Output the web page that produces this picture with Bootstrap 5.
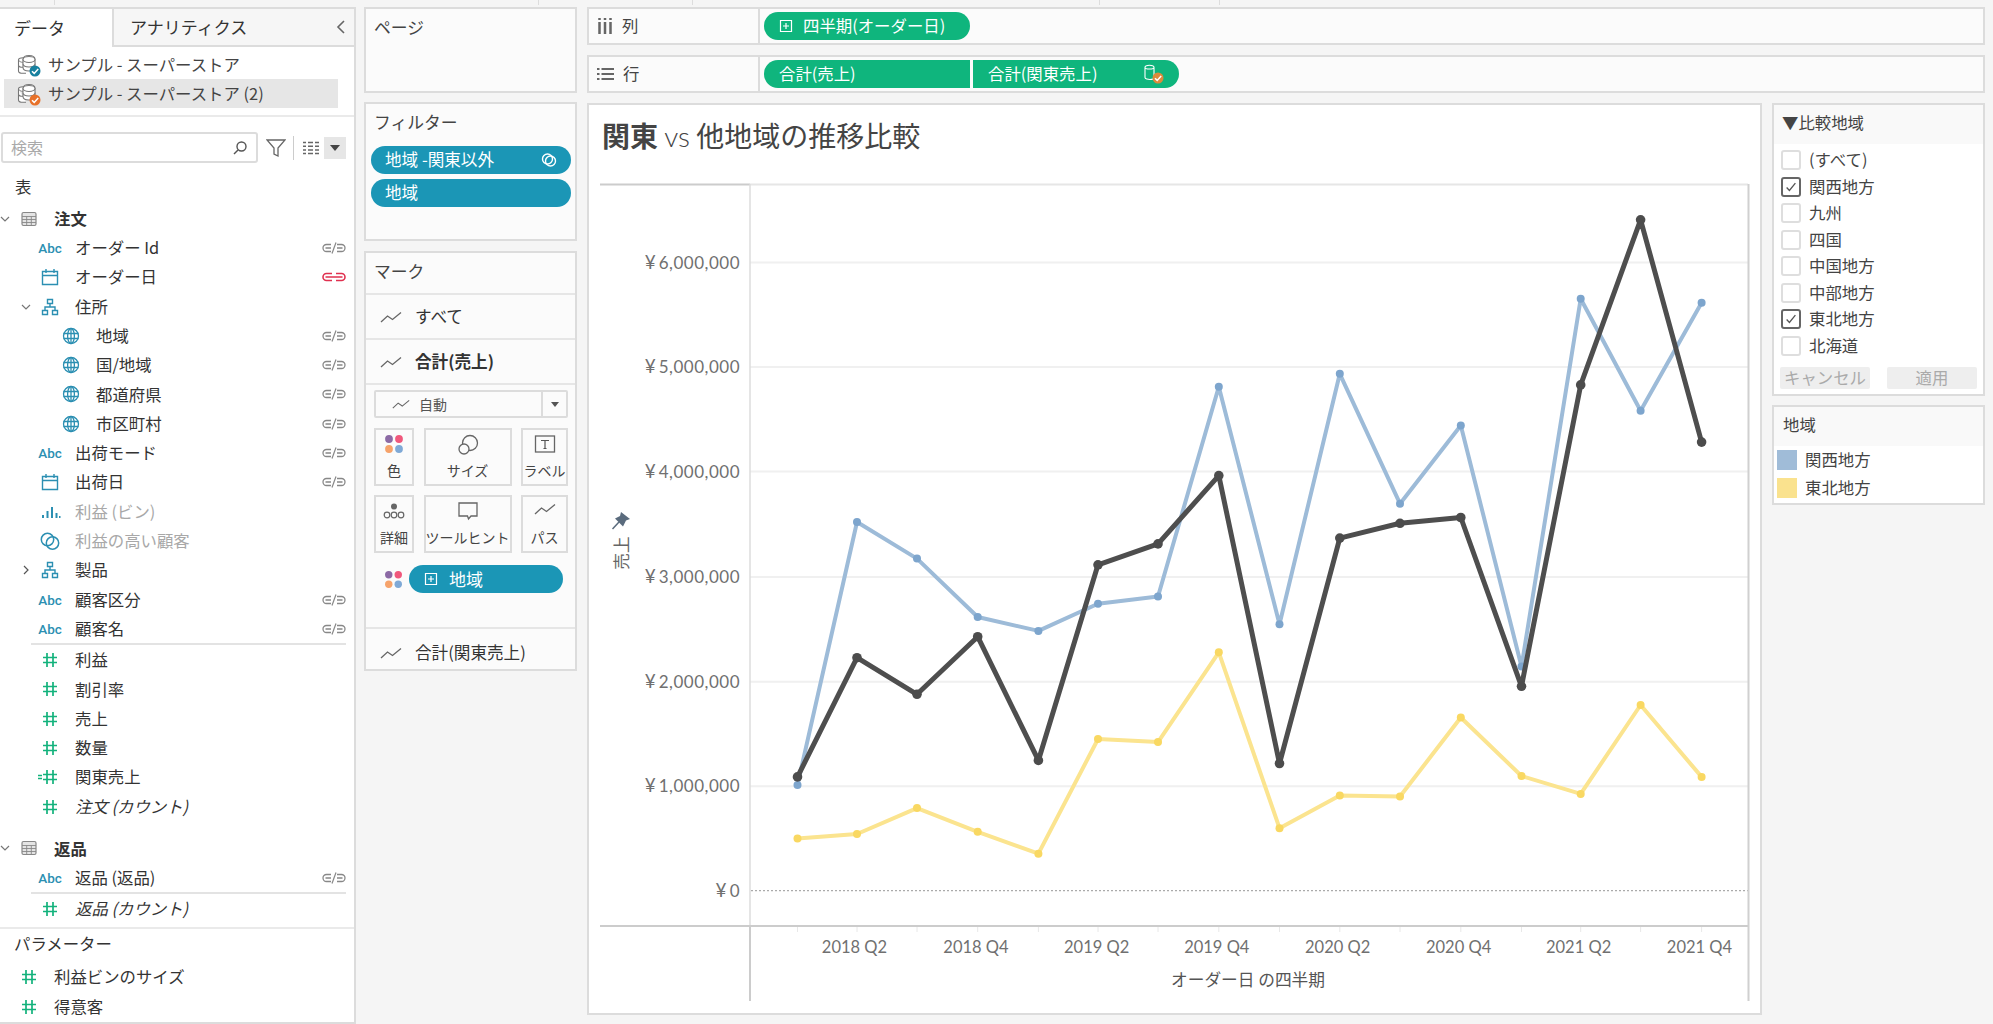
<!DOCTYPE html>
<html lang="ja">
<head>
<meta charset="utf-8">
<title>関東 vs 他地域の推移比較</title>
<link href="https://cdn.jsdelivr.net/npm/bootstrap@5.3.0/dist/css/bootstrap.min.css" rel="stylesheet">
<style>
html,body{height:1024px;overflow:hidden}
body{background:#f5f5f5;color:#333;font-family:"Noto Sans CJK JP","Noto Sans",sans-serif;font-size:16.4px;line-height:1.2}
svg{display:block;flex:none}
.t-strip{height:7px}
.t-strip span{height:5px;border-right:1px solid #ddd}
.t-root{height:1017px}
.t-box{border:2px solid #dcdcdc;background:#fbfbfb}
.t-left{width:356px;height:1017px;background:#fff;border-top:2px solid #dcdcdc;border-right:2px solid #dcdcdc;border-bottom:2px solid #dcdcdc;overflow:hidden}
.t-tabs{height:38px;font-size:17px}
.t-tab1{width:112px;padding-left:14px}
.t-tab2{padding-left:16px;padding-right:8px;background:#f6f6f6;border-left:2px solid #dcdcdc;border-bottom:2px solid #dcdcdc}
.t-src{height:29px;padding-left:16px;margin:0 16px 0 4px;gap:7px;color:#444}
.t-src.t-sel{background:#e6e6e6}
.t-src svg{margin-left:-3px}
.t-hr{height:2px;background:#eaeaea}
.t-sep{height:2px;background:#e3e3e3;margin:0 8px 0 31px}
.t-srch{width:257px;height:31px;margin-left:1px;border:2px solid #dcdcdc;border-radius:3px;padding:0 8px;color:#aaa;font-size:16px}
.t-tool{height:31px;margin-top:15px}
.t-ddbtn{width:22px;height:22px;background:#e6e6e6}
.t-ddbtn i{border-left:5px solid transparent;border-right:5px solid transparent;border-top:6px solid #444}
.t-row{height:29.3px;padding-right:8px}
.t-row-1{padding-left:38px}
.t-row-2{padding-left:59px}
.t-row-g{padding-left:0}
.t-row-c{padding-left:20px}
.t-row-p{padding-left:17px}
.t-slot{width:24px;height:24px;margin-right:13px;flex:none}
.t-abc{color:#2b8fb2;font:500 13.5px Roboto,sans-serif}
.t-gray{color:#a8a8a8}
.t-chv{width:12px;margin-right:6px;flex:none}
.t-chv0{width:10px;margin-right:7px;flex:none}
.t-col2{width:213px;margin-left:8px}
.t-head{padding:8px 8px 0 8px;color:#444;font-size:16.8px}
.t-pill{height:28px;border-radius:14px;background:#1b96b6;color:#fff;padding:0 14px;font-size:16.6px}
.t-pillg{height:28px;background:#0fb57d;color:#fff;padding:0 15px}
.t-mrow{height:45px;padding-left:14px;gap:13px;border-top:2px solid #e6e6e6;font-size:16.6px}
.t-dd{height:28px;margin:7px 7px 0 8px;border:2px solid #dcdcdc;border-radius:2px;padding-left:16px;gap:9px;color:#555;font-size:14px}
.t-ddarrow{width:25px;height:100%;border-left:2px solid #dcdcdc;margin-left:auto}
.t-ddarrow i{border-left:4px solid transparent;border-right:4px solid transparent;border-top:5px solid #555}
.t-mgrid{display:grid;grid-template-columns:40px 88px 47px;column-gap:9.5px;row-gap:9px;margin:10px 7px 0 8px}
.t-mbtn{height:58px;border:2px solid #dcdcdc;font-size:14px;color:#444;padding-top:4px;white-space:nowrap;justify-content:space-between;padding-bottom:5px}
.t-main{margin-left:10px;width:1398px}
.t-shelf{height:38px;background:#fbfbfb;border:2px solid #dcdcdc;width:1398px;margin-bottom:10px}
.t-shelflab{width:171px;height:100%;border-right:2px solid #dcdcdc;padding-left:8px;gap:9px;color:#444;flex:none}
.t-chart{width:1175px;height:912px;background:#fff;border:2px solid #dcdcdc;overflow:hidden}
.t-title{height:66px;padding:12px 0 0 13px;font-size:28px;color:#444;line-height:36px}
.t-title b{font-weight:700}
.t-title span{font-family:Lato,"Noto Sans CJK JP",sans-serif;font-weight:300}
.t-side{width:213px;margin-left:10px}
.t-shead{height:39px;background:#f9f9f9;padding-left:8px;padding-bottom:3px;color:#444}
.t-card{background:#fff;border:2px solid #dcdcdc}
.t-chk{height:26.5px;padding-left:7px;gap:8px;color:#444}
.t-box20{width:20px;height:20px;border:2px solid #dedede;border-radius:3px;flex:none}
.t-box20.t-on{border-color:#666}
.t-btns{gap:17px;padding:8px 6px 0 6px;height:41px}
.t-gbtn{width:90px;height:22px;background:#eee;color:#aaa;border-radius:2px}
.t-leg{height:28px;padding-left:3px;gap:8px;color:#444}
.t-sw{width:20px;height:20px;flex:none}
.ax{font-family:Lato,"Noto Sans CJK JP",sans-serif;font-size:17px;fill:#707070;letter-spacing:.5px}
.ax tspan{font-size:19px;letter-spacing:3px}
.axx{font-family:Lato,"Noto Sans CJK JP",sans-serif;font-size:16.5px;fill:#707070}
.ax2{font-family:"Noto Sans CJK JP",sans-serif;font-size:16.7px;fill:#555}
</style>
</head>
<body>
<svg width="0" height="0" class="position-absolute">
<defs>
<symbol id="i-hash" viewBox="0 0 24 24"><path d="M9 5v14M15 5v14M5 9.500h14M5 14.500h14" stroke="#13b27c" stroke-width="1.700" fill="none"/></symbol>
<symbol id="i-cal" viewBox="0 0 24 24"><path d="M4.500 6.500h15v13h-15zM4.500 10.500h15M8 4v4M16 4v4" stroke="#2b8fb2" stroke-width="1.400" fill="none"/></symbol>
<symbol id="i-tree" viewBox="0 0 24 24"><path d="M9.500 4.500h5v4h-5zM4.500 15.500h5v4h-5zM14.500 15.500h5v4h-5zM12 8.500v3.500M7 15.500V12h10v3.500" stroke="#2b8fb2" stroke-width="1.400" fill="none"/></symbol>
<symbol id="i-globe" viewBox="0 0 24 24"><g stroke="#2b8fb2" stroke-width="1.300" fill="none"><circle cx="12" cy="12" r="7.500"/><ellipse cx="12" cy="12" rx="3.400" ry="7.500"/><path d="M4.500 9.500h15M4.500 14.500h15M12 4.500v15"/></g></symbol>
<symbol id="i-bins" viewBox="0 0 24 24"><path d="M4 18h2v-3H4zM8.500 18h2v-7h-2zM13 18h2V7h-2zM17.500 18h2v-5h-2z" fill="#2b8fb2"/><path d="M21 18h1.500v-2H21z" fill="#2b8fb2"/></symbol>
<symbol id="i-set" viewBox="0 0 24 24"><g stroke="#2b8fb2" stroke-width="1.500" fill="none"><circle cx="9.500" cy="10.500" r="6.200"/><circle cx="14.500" cy="14" r="6.200"/></g></symbol>
<symbol id="i-table" viewBox="0 0 24 24"><rect x="5" y="5.500" width="14" height="13" rx="1.500" fill="#e4e4e4" stroke="#888" stroke-width="1.200"/><path d="M5 9.500h14M5 12.500h14M5 15.500h14M9.700 9.500v9M14.300 9.500v9" stroke="#888" stroke-width=".9"/></symbol>
<symbol id="i-link" viewBox="0 0 24 12"><path d="M9 2.500H4.500a3.500 3.500 0 0 0 0 7H9M3.500 6H9M15 2.500h4.500a3.500 3.500 0 0 1 0 7H15M15 6h5.500" stroke="#888" stroke-width="1.300" fill="none"/><path d="M10 11.500 14 .5" stroke="#888" stroke-width="1.200"/></symbol>
<symbol id="i-linkr" viewBox="0 0 24 12"><path d="M10 2.500H4.500a3.500 3.500 0 0 0 0 7H10M14 2.500h5.500a3.500 3.500 0 0 1 0 7H14M3.500 6h17" stroke="#e0304f" stroke-width="1.600" fill="none"/></symbol>
<symbol id="i-line" viewBox="0 0 22 14"><path d="M1 12l6.500-6 5 3.500L21 2.500" stroke="#666" stroke-width="1.300" fill="none"/></symbol>
<symbol id="i-down" viewBox="0 0 10 10"><path d="M1 3l4 4 4-4" stroke="#777" stroke-width="1.200" fill="none"/></symbol>
<symbol id="i-right" viewBox="0 0 10 10"><path d="M3 1l4 4-4 4" stroke="#555" stroke-width="1.200" fill="none"/></symbol>
<symbol id="i-db" viewBox="0 0 24 24"><g stroke="#777" stroke-width="1.100" fill="#fff"><ellipse cx="6" cy="7" rx="4.500" ry="2.300"/><path d="M1.500 7v11c0 1.500 2 2.300 4.500 2.300h3M1.500 12c0 1.500 2 2.300 4.500 2.300"/><path d="M6 6.500c0-2.500 2.500-4 6-4s6 1.500 6 4v8c0 2-2.500 3.500-6 3.500s-6-1.500-6-3.500z"/><ellipse cx="12" cy="6.500" rx="6" ry="3"/><path d="M6 10.500c0 2 2.500 3.500 6 3.500s6-1.500 6-3.500"/></g></symbol>
<symbol id="i-ok" viewBox="0 0 12 12"><path d="M3 6.200l2.200 2.200L9.200 4" stroke="#fff" stroke-width="1.500" fill="none"/></symbol>
<symbol id="i-plus" viewBox="0 0 14 14"><path d="M1.500 1.500h11v11h-11zM7 4v6M4 7h6" stroke="#fff" stroke-width="1.200" fill="none"/></symbol>
<symbol id="i-dots" viewBox="0 0 20 20"><circle cx="5" cy="5" r="3.900" fill="#8c6aa5"/><circle cx="15" cy="5" r="3.900" fill="#f0587c"/><circle cx="5" cy="15" r="3.900" fill="#f6a36b"/><circle cx="15" cy="15" r="3.900" fill="#7fa9d6"/></symbol>
<symbol id="i-tick" viewBox="0 0 16 16"><path d="M3 8.500l3.200 3.500L13 3.500" stroke="#555" stroke-width="1.500" fill="none"/></symbol>
<marker id="m-b" markerUnits="userSpaceOnUse" markerWidth="12" markerHeight="12" refX="6" refY="6"><circle cx="6" cy="6" r="4" fill="#7da5cd"/></marker>
<marker id="m-y" markerUnits="userSpaceOnUse" markerWidth="12" markerHeight="12" refX="6" refY="6"><circle cx="6" cy="6" r="4" fill="#f9d862"/></marker>
<marker id="m-d" markerUnits="userSpaceOnUse" markerWidth="12" markerHeight="12" refX="6" refY="6"><circle cx="6" cy="6" r="4.800" fill="#4c4c4c"/></marker>
</defs>
</svg>

<div class="t-strip d-flex"><span style="width:55px"></span><span style="width:484px"></span><span style="width:154px"></span><span style="width:407px"></span><span style="width:120px"></span></div>

<div class="t-root d-flex align-items-start">
  <!-- data pane -->
  <aside class="t-left flex-none">
    <div class="t-tabs d-flex">
      <div class="t-tab1 d-flex align-items-center">データ</div>
      <div class="t-tab2 flex-grow-1 d-flex align-items-center justify-content-between"><span>アナリティクス</span><svg width="10" height="16" viewBox="0 0 10 16"><path d="M8 2L2 8l6 6" stroke="#666" stroke-width="1.600" fill="none"/></svg></div>
    </div>
    <div style="height:3px"></div>
    <div class="t-src d-flex align-items-center"><span class="position-relative"><svg width="24" height="24"><use href="#i-db"/></svg><svg class="position-absolute bottom-0 end-0" width="12" height="12" viewBox="0 0 12 12"><circle cx="6" cy="6" r="5.500" fill="#17809f"/><use href="#i-ok"/></svg></span><span>サンプル - スーパーストア</span></div>
    <div class="t-src t-sel d-flex align-items-center"><span class="position-relative"><svg width="24" height="24"><use href="#i-db"/></svg><svg class="position-absolute bottom-0 end-0" width="12" height="12" viewBox="0 0 12 12"><circle cx="6" cy="6" r="5.500" fill="#e8722a"/><use href="#i-ok"/></svg></span><span>サンプル - スーパーストア (2)</span></div>
    <div class="t-hr" style="margin-top:7px"></div>
    <div class="t-tool d-flex align-items-center">
      <div class="t-srch d-flex align-items-center justify-content-between flex-none"><span>検索</span><svg width="16" height="16" viewBox="0 0 16 16"><circle cx="9.500" cy="6.500" r="4.500" stroke="#555" stroke-width="1.400" fill="none"/><path d="M6 10l-4 4" stroke="#555" stroke-width="1.500"/></svg></div>
      <svg class="ms-2" width="20" height="22" viewBox="0 0 20 22"><path d="M1 3h18l-7 8v8l-4-2v-6z" stroke="#666" stroke-width="1.300" fill="none"/></svg>
      <span style="width:1px;height:24px;background:#ccc;margin:0 8px 0 7px"></span>
      <svg width="18" height="14" viewBox="0 0 18 14"><path d="M1 1.500h3M6 1.500h5M13 1.500h4M1 5.200h3M6 5.200h5M13 5.200h4M1 8.900h3M6 8.900h5M13 8.900h4M1 12.500h3M6 12.500h5M13 12.500h4" stroke="#666" stroke-width="1.500"/></svg>
      <div class="t-ddbtn d-flex align-items-center justify-content-center ms-1"><i></i></div>
    </div>
    <div class="d-flex align-items-center" style="height:29px;padding-left:15px;margin-top:9px">表</div>
    <div style="height:3px"></div>

    <div class="t-row t-row-g d-flex align-items-center"><svg class="t-chv0" width="10" height="10"><use href="#i-down"/></svg><svg class="t-slot" width="24" height="24"><use href="#i-table"/></svg><b>注文</b></div>
    <div class="t-row t-row-1 d-flex align-items-center"><span class="t-slot t-abc d-flex align-items-center justify-content-center">Abc</span><span class="flex-grow-1">オーダー Id</span><svg width="24" height="12"><use href="#i-link"/></svg></div>
    <div class="t-row t-row-1 d-flex align-items-center"><svg class="t-slot" width="24" height="24"><use href="#i-cal"/></svg><span class="flex-grow-1">オーダー日</span><svg width="24" height="12"><use href="#i-linkr"/></svg></div>
    <div class="t-row t-row-c d-flex align-items-center"><svg class="t-chv" width="12" height="10"><use href="#i-down"/></svg><svg class="t-slot" width="24" height="24"><use href="#i-tree"/></svg><span>住所</span></div>
    <div class="t-row t-row-2 d-flex align-items-center"><svg class="t-slot" width="24" height="24"><use href="#i-globe"/></svg><span class="flex-grow-1">地域</span><svg width="24" height="12"><use href="#i-link"/></svg></div>
    <div class="t-row t-row-2 d-flex align-items-center"><svg class="t-slot" width="24" height="24"><use href="#i-globe"/></svg><span class="flex-grow-1">国/地域</span><svg width="24" height="12"><use href="#i-link"/></svg></div>
    <div class="t-row t-row-2 d-flex align-items-center"><svg class="t-slot" width="24" height="24"><use href="#i-globe"/></svg><span class="flex-grow-1">都道府県</span><svg width="24" height="12"><use href="#i-link"/></svg></div>
    <div class="t-row t-row-2 d-flex align-items-center"><svg class="t-slot" width="24" height="24"><use href="#i-globe"/></svg><span class="flex-grow-1">市区町村</span><svg width="24" height="12"><use href="#i-link"/></svg></div>
    <div class="t-row t-row-1 d-flex align-items-center"><span class="t-slot t-abc d-flex align-items-center justify-content-center">Abc</span><span class="flex-grow-1">出荷モード</span><svg width="24" height="12"><use href="#i-link"/></svg></div>
    <div class="t-row t-row-1 d-flex align-items-center"><svg class="t-slot" width="24" height="24"><use href="#i-cal"/></svg><span class="flex-grow-1">出荷日</span><svg width="24" height="12"><use href="#i-link"/></svg></div>
    <div class="t-row t-row-1 d-flex align-items-center t-gray"><svg class="t-slot" width="24" height="24"><use href="#i-bins"/></svg><span>利益 (ビン)</span></div>
    <div class="t-row t-row-1 d-flex align-items-center t-gray"><svg class="t-slot" width="24" height="24"><use href="#i-set"/></svg><span>利益の高い顧客</span></div>
    <div class="t-row t-row-c d-flex align-items-center"><svg class="t-chv" width="12" height="10"><use href="#i-right"/></svg><svg class="t-slot" width="24" height="24"><use href="#i-tree"/></svg><span>製品</span></div>
    <div class="t-row t-row-1 d-flex align-items-center"><span class="t-slot t-abc d-flex align-items-center justify-content-center">Abc</span><span class="flex-grow-1">顧客区分</span><svg width="24" height="12"><use href="#i-link"/></svg></div>
    <div class="t-row t-row-1 d-flex align-items-center"><span class="t-slot t-abc d-flex align-items-center justify-content-center">Abc</span><span class="flex-grow-1">顧客名</span><svg width="24" height="12"><use href="#i-link"/></svg></div>
    <div class="t-sep"></div>
    <div class="t-row t-row-1 d-flex align-items-center"><svg class="t-slot" width="24" height="24"><use href="#i-hash"/></svg><span>利益</span></div>
    <div class="t-row t-row-1 d-flex align-items-center"><svg class="t-slot" width="24" height="24"><use href="#i-hash"/></svg><span>割引率</span></div>
    <div class="t-row t-row-1 d-flex align-items-center"><svg class="t-slot" width="24" height="24"><use href="#i-hash"/></svg><span>売上</span></div>
    <div class="t-row t-row-1 d-flex align-items-center"><svg class="t-slot" width="24" height="24"><use href="#i-hash"/></svg><span>数量</span></div>
    <div class="t-row t-row-1 d-flex align-items-center"><svg class="t-slot" width="24" height="24" viewBox="0 0 24 24"><path d="M-1 10.500h5M-1 13.500h5" stroke="#13b27c" stroke-width="1.300"/><use href="#i-hash"/></svg><span>関東売上</span></div>
    <div class="t-row t-row-1 d-flex align-items-center"><svg class="t-slot" width="24" height="24"><use href="#i-hash"/></svg><i>注文 (カウント)</i></div>
    <div style="height:12.5px"></div>
    <div class="t-row t-row-g d-flex align-items-center"><svg class="t-chv0" width="10" height="10"><use href="#i-down"/></svg><svg class="t-slot" width="24" height="24"><use href="#i-table"/></svg><b>返品</b></div>
    <div class="t-row t-row-1 d-flex align-items-center"><span class="t-slot t-abc d-flex align-items-center justify-content-center">Abc</span><span class="flex-grow-1">返品 (返品)</span><svg width="24" height="12"><use href="#i-link"/></svg></div>
    <div class="t-sep"></div>
    <div class="t-row t-row-1 d-flex align-items-center"><svg class="t-slot" width="24" height="24"><use href="#i-hash"/></svg><i>返品 (カウント)</i></div>
    <div class="t-hr" style="margin-top:3px"></div>
    <div class="d-flex align-items-center" style="height:30px;padding-left:14px">パラメーター</div>
    <div style="height:4px"></div>
    <div class="t-row t-row-p d-flex align-items-center"><svg class="t-slot" width="24" height="24"><use href="#i-hash"/></svg><span>利益ビンのサイズ</span></div>
    <div class="t-row t-row-p d-flex align-items-center"><svg class="t-slot" width="24" height="24"><use href="#i-hash"/></svg><span>得意客</span></div>
  </aside>

  <!-- cards column -->
  <section class="t-col2 flex-none">
    <div class="t-box" style="height:86px"><div class="t-head">ページ</div></div>
    <div class="t-box" style="height:139px;margin-top:9px">
      <div class="t-head" style="padding-bottom:14px">フィルター</div>
      <div class="d-flex flex-column" style="gap:5px;padding:0 4px 0 5px">
        <div class="t-pill d-flex align-items-center justify-content-between"><span>地域 -関東以外</span><svg width="16" height="16" viewBox="0 0 16 16"><g stroke="#fff" stroke-width="1.400" fill="none"><circle cx="6.500" cy="7" r="5"/><circle cx="9.500" cy="9" r="5"/></g></svg></div>
        <div class="t-pill d-flex align-items-center"><span>地域</span></div>
      </div>
    </div>
    <div class="t-box" style="height:420px;margin-top:10px">
      <div class="t-head" style="height:40px">マーク</div>
      <div class="t-mrow d-flex align-items-center"><svg width="22" height="14"><use href="#i-line"/></svg><span>すべて</span></div>
      <div class="t-mrow d-flex align-items-center"><svg width="22" height="14"><use href="#i-line"/></svg><b>合計(売上)</b></div>
      <div class="border-top border-2" style="border-color:#e6e6e6 !important"></div>
      <div class="t-dd d-flex align-items-center" style="margin-top:5px"><svg width="18" height="12"><use href="#i-line"/></svg><span>自動</span><span class="t-ddarrow d-flex align-items-center justify-content-center"><i></i></span></div>
      <div class="t-mgrid">
        <div class="t-mbtn d-flex flex-column align-items-center"><svg width="20" height="20"><use href="#i-dots"/></svg><span>色</span></div>
        <div class="t-mbtn d-flex flex-column align-items-center"><svg width="22" height="22" viewBox="0 0 22 22"><g stroke="#666" stroke-width="1.300" fill="#fbfbfb"><circle cx="13" cy="9" r="7.500"/><circle cx="7" cy="15" r="5"/></g></svg><span>サイズ</span></div>
        <div class="t-mbtn d-flex flex-column align-items-center"><svg width="22" height="20" viewBox="0 0 22 20"><rect x="1.500" y="2" width="19" height="16" fill="none" stroke="#666" stroke-width="1.300"/><path d="M7 6.500h8M11 6.500v8M9.500 14.500h3" stroke="#555" stroke-width="1.200"/></svg><span style="margin:0 -2px">ラベル</span></div>
        <div class="t-mbtn d-flex flex-column align-items-center"><svg width="24" height="20" viewBox="0 0 24 20"><g stroke="#666" stroke-width="1.200" fill="none"><circle cx="5" cy="14" r="2.800"/><circle cx="12" cy="14" r="2.800"/><circle cx="19" cy="14" r="2.800"/></g><circle cx="12" cy="5.500" r="3" fill="#666"/></svg><span>詳細</span></div>
        <div class="t-mbtn d-flex flex-column align-items-center"><svg width="22" height="20" viewBox="0 0 22 20"><path d="M2 2h18v13h-6l-2.500 3-1-3H2z" fill="none" stroke="#666" stroke-width="1.300"/></svg><span>ツールヒント</span></div>
        <div class="t-mbtn d-flex flex-column align-items-center"><svg width="22" height="16"><use href="#i-line"/></svg><span>パス</span></div>
      </div>
      <div class="d-flex align-items-center" style="margin:12px 0 0 18px;gap:6px"><svg width="19" height="19"><use href="#i-dots"/></svg><div class="t-pill d-flex align-items-center flex-grow-1" style="margin-right:12px;gap:11px;padding-left:15px"><svg width="14" height="14"><use href="#i-plus"/></svg><span style="font-size:17px">地域</span></div></div>
      <div class="t-mrow d-flex align-items-center" style="margin-top:34px;padding-top:4px"><svg width="22" height="14"><use href="#i-line"/></svg><span>合計(関東売上)</span></div>
    </div>
  </section>

  <!-- worksheet -->
  <main class="t-main flex-none">
    <div class="t-shelf d-flex align-items-center">
      <div class="t-shelflab d-flex align-items-center"><svg width="16" height="18" viewBox="0 0 16 18"><path d="M2.500 1v2M2.500 5v12M8 1v2M8 5v12M13.500 1v2M13.500 5v12" stroke="#666" stroke-width="2.500"/></svg><span>列</span></div>
      <div class="t-pillg d-flex align-items-center" style="width:206px;margin-left:4px;border-radius:14px;gap:10px"><svg width="14" height="14"><use href="#i-plus"/></svg><span>四半期(オーダー日)</span></div>
    </div>
    <div class="t-shelf d-flex align-items-center">
      <div class="t-shelflab d-flex align-items-center"><svg width="17" height="14" viewBox="0 0 17 14"><path d="M0 2h2.500M4.500 2H17M0 7h2.500M4.500 7H17M0 12h2.500M4.500 12H17" stroke="#666" stroke-width="2"/></svg><span>行</span></div>
      <div class="t-pillg d-flex align-items-center" style="width:206px;margin-left:4px;border-radius:14px 0 0 14px"><span>合計(売上)</span></div>
      <div class="t-pillg d-flex align-items-center justify-content-between" style="width:206px;margin-left:3px;border-radius:0 14px 14px 0"><span>合計(関東売上)</span><span class="position-relative" style="width:20px;height:20px"><svg width="12" height="17" viewBox="0 0 12 17"><path d="M1 3.500c0-3 9-3 9 0v10c0 1.500-2 2-4 2S1 15 1 13.500zM1 3.500c0 2 9 2 9 0" stroke="#fff" stroke-width="1.100" fill="none"/></svg><svg class="position-absolute bottom-0 end-0" width="12" height="12" viewBox="0 0 12 12"><circle cx="6" cy="6" r="5.500" fill="#dd8a3c"/><use href="#i-ok"/></svg></span></div>
    </div>

    <div class="d-flex align-items-start">
      <section class="t-chart flex-none">
        <div class="t-title"><b>関東</b> <span>vs</span> 他地域の推移比較</div>
        <svg width="1171" height="842" viewBox="589 170 1171 842" role="img" aria-label="売上の折れ線グラフ">
          <g stroke="#f0f0f0" stroke-width="2" fill="none">
            <path d="M750 261.600H1748M750 366H1748M750 470.500H1748M750 576H1748M750 680.800H1748M750 785.300H1748"/>
          </g>
          <path d="M751 889.700H1748" stroke="#aaa" stroke-width="1.300" stroke-dasharray="2 2"/>
          <path d="M600 183.500H750" stroke="#ccc" stroke-width="2"/>
          <path d="M750 183.500H1748" stroke="#e6e6e6" stroke-width="2"/>
          <path d="M750 183V925" stroke="#ddd" stroke-width="1.500"/>
          <path d="M750 925V1000" stroke="#ccc" stroke-width="2"/>
          <path d="M600 925H1748" stroke="#ccc" stroke-width="2"/>
          <path d="M1748.500 183V1000" stroke="#d0d0d0" stroke-width="2"/>
          <path d="M797.500 926v5M857 926v5M917 926v5M977.700 926v5M1038.400 926v5M1098 926v5M1158 926v5M1218.800 926v5M1279.500 926v5M1339.800 926v5M1400 926v5M1460.800 926v5M1521.500 926v5M1580.700 926v5M1640.600 926v5M1701.600 926v5" stroke="#e8e8e8" stroke-width="1"/>

          <g class="ax" text-anchor="end">
            <text x="740" y="267.500"><tspan>¥</tspan>6,000,000</text>
            <text x="740" y="372"><tspan>¥</tspan>5,000,000</text>
            <text x="740" y="476.500"><tspan>¥</tspan>4,000,000</text>
            <text x="740" y="582"><tspan>¥</tspan>3,000,000</text>
            <text x="740" y="686.800"><tspan>¥</tspan>2,000,000</text>
            <text x="740" y="791.300"><tspan>¥</tspan>1,000,000</text>
            <text x="740" y="896"><tspan>¥</tspan>0</text>
          </g>
          <g class="axx" text-anchor="middle">
            <text x="854.500" y="952">2018 Q2</text>
            <text x="976" y="952">2018 Q4</text>
            <text x="1096.700" y="952">2019 Q2</text>
            <text x="1216.800" y="952">2019 Q4</text>
            <text x="1337.700" y="952">2020 Q2</text>
            <text x="1458.600" y="952">2020 Q4</text>
            <text x="1578.600" y="952">2021 Q2</text>
            <text x="1699.500" y="952">2021 Q4</text>
          </g>
          <text class="ax2" x="1248" y="985" text-anchor="middle">オーダー日 の四半期</text>
          <text class="ax2" transform="translate(628 552) rotate(-90)" text-anchor="middle" style="fill:#666">売上</text>
          <path d="M621 511L630 518L626 519.500L623 525.500L615 517.500L620 515Z" fill="#5a6b7d"/>
          <path d="M612.500 528L619 521" stroke="#5a6b7d" stroke-width="1.500"/>

          <polyline fill="none" stroke="#9dbbd8" stroke-width="4" stroke-linejoin="round" marker-start="url(#m-b)" marker-mid="url(#m-b)" marker-end="url(#m-b)" points="797.500,783.900 857,521 917,557.600 977.700,616 1038.400,629.900 1098,602.700 1158,595.500 1218.800,385.700 1279.500,623.200 1339.800,372.800 1400,502.700 1460.800,424.600 1521.500,665.600 1580.700,297.800 1640.600,409.800 1701.600,301.800"/>
          <polyline fill="none" stroke="#fbe48f" stroke-width="4" stroke-linejoin="round" marker-start="url(#m-y)" marker-mid="url(#m-y)" marker-end="url(#m-y)" points="797.500,837.500 857,833 917,807.100 977.700,830.800 1038.400,852.700 1098,738 1158,741.100 1218.800,651.300 1279.500,827.200 1339.800,794.600 1400,795.500 1460.800,716.500 1521.500,775 1580.700,792.900 1640.600,704 1701.600,775.900"/>
          <polyline fill="none" stroke="#4e4e4e" stroke-width="5" stroke-linejoin="round" marker-start="url(#m-d)" marker-mid="url(#m-d)" marker-end="url(#m-d)" points="797.500,775.900 857,656.700 917,693.300 977.700,635.700 1038.400,759.400 1098,563.800 1158,542.900 1218.800,474.600 1279.500,762.500 1339.800,537.100 1400,522.300 1460.800,516.500 1521.500,685.300 1580.700,383.900 1640.600,218.800 1701.600,441.100"/>
        </svg>
      </section>

      <section class="t-side flex-none">
        <div class="t-card" style="height:293px">
          <div class="t-shead d-flex align-items-center">▼比較地域</div>
          <div style="height:3px"></div>
          <div class="t-chk d-flex align-items-center"><span class="t-box20"></span><span>(すべて)</span></div>
          <div class="t-chk d-flex align-items-center"><span class="t-box20 t-on d-flex align-items-center justify-content-center"><svg width="14" height="14"><use href="#i-tick"/></svg></span><span>関西地方</span></div>
          <div class="t-chk d-flex align-items-center"><span class="t-box20"></span><span>九州</span></div>
          <div class="t-chk d-flex align-items-center"><span class="t-box20"></span><span>四国</span></div>
          <div class="t-chk d-flex align-items-center"><span class="t-box20"></span><span>中国地方</span></div>
          <div class="t-chk d-flex align-items-center"><span class="t-box20"></span><span>中部地方</span></div>
          <div class="t-chk d-flex align-items-center"><span class="t-box20 t-on d-flex align-items-center justify-content-center"><svg width="14" height="14"><use href="#i-tick"/></svg></span><span>東北地方</span></div>
          <div class="t-chk d-flex align-items-center"><span class="t-box20"></span><span>北海道</span></div>
          <div class="t-btns d-flex"><div class="t-gbtn d-flex align-items-center justify-content-center">キャンセル</div><div class="t-gbtn d-flex align-items-center justify-content-center">適用</div></div>
        </div>
        <div class="t-card" style="height:100px;margin-top:9px">
          <div class="t-shead d-flex align-items-center" style="padding-left:9px">地域</div>
          <div class="t-leg d-flex align-items-center"><span class="t-sw" style="background:#a0bcd8"></span><span>関西地方</span></div>
          <div class="t-leg d-flex align-items-center"><span class="t-sw" style="background:#fae28e"></span><span>東北地方</span></div>
        </div>
      </section>
    </div>
  </main>
</div>
<script src="https://cdn.jsdelivr.net/npm/bootstrap@5.3.0/dist/js/bootstrap.bundle.min.js"></script>
</body>
</html>
